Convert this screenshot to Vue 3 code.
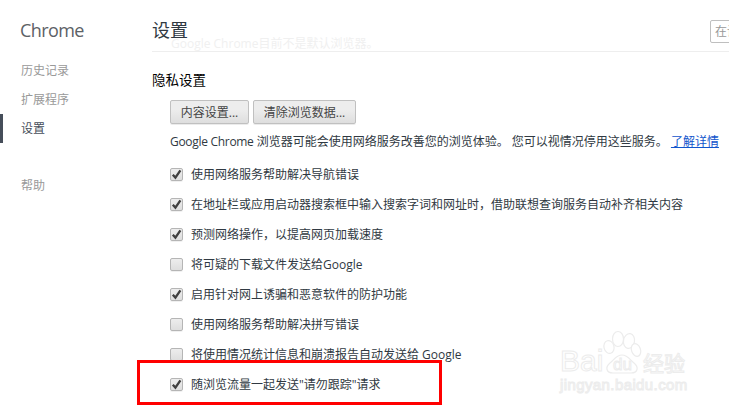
<template>
  <div class="page">
    <aside class="sidebar">
      <h1 class="brand">Chrome</h1>
      <ul class="nav">
        <li v-for="item in navItems" :key="item" :class="{ selected: item === '设置' }">{{ item }}</li>
      </ul>
      <div class="nav help">帮助</div>
    </aside>

    <main class="content">
      <header class="top">
        <h2 class="title">设置</h2>
        <div class="search">在设置中搜索</div>
        <div class="ghost">Google Chrome目前不是默认浏览器。</div>
      </header>

      <section class="privacy">
        <h3 class="section-title">隐私设置</h3>
        <div class="section-body">
          <div class="buttons">
            <button class="btn first">内容设置...</button>
            <button class="btn second">清除浏览数据...</button>
          </div>
          <p class="desc"><span class="latin">Google Chrome</span> 浏览器可能会使用网络服务改善您的浏览体验。 您可以视情况停用这些服务。 <a class="link">了解详情</a></p>
          <label v-for="opt in options" :key="opt.text" class="option">
            <span class="box">
              <svg v-if="opt.checked" width="11" height="11" viewBox="0 0 11 11">
                <path d="M1.8 5.8 L4.4 8.6 L9.4 1.4" fill="none" stroke="#3f3f3f" stroke-width="2.3" />
              </svg>
            </span>
            <span>{{ opt.text }}</span>
          </label>
        </div>
      </section>
    </main>

    <div class="highlight"></div>

    <div class="watermark">
      <span class="wm-bai">Bai</span>
      <svg class="wm-paw" width="42" height="46" viewBox="0 0 42 46" fill="#fff" stroke="#ececec" stroke-width="1.2">
        <ellipse cx="7" cy="17" rx="5" ry="6.5" transform="rotate(-15 7 17)" />
        <ellipse cx="16" cy="9" rx="5.5" ry="7.5" />
        <ellipse cx="27" cy="11" rx="5.5" ry="7.5" transform="rotate(10 27 11)" />
        <ellipse cx="34" cy="20" rx="4.5" ry="6.5" transform="rotate(-20 34 20)" />
        <path d="M20 25 C26 25 28 30 32 33 C37 37 36 43 29 43 L11 43 C4 43 3 37 8 33 C12 30 14 25 20 25 Z" />
      </svg>
      <span class="wm-du">du</span>
      <span class="wm-jy">经验</span>
      <span class="wm-url">jingyan.baidu.com</span>
    </div>
  </div>
</template>

<script setup>
const navItems = ['历史记录', '扩展程序', '设置']

const options = [
  { text: '使用网络服务帮助解决导航错误', checked: true },
  { text: '在地址栏或应用启动器搜索框中输入搜索字词和网址时，借助联想查询服务自动补齐相关内容', checked: true },
  { text: '预测网络操作，以提高网页加载速度', checked: true },
  { text: '将可疑的下载文件发送给Google', checked: false },
  { text: '启用针对网上诱骗和恶意软件的防护功能', checked: true },
  { text: '使用网络服务帮助解决拼写错误', checked: false },
  { text: '将使用情况统计信息和崩溃报告自动发送给 Google', checked: false },
  { text: '随浏览流量一起发送"请勿跟踪"请求', checked: true },
]
</script>

<style>
html, body {
  margin: 0;
  background: #fff;
  overflow: hidden;
}
</style>

<style scoped>
.page {
  position: relative;
  width: 729px;
  height: 410px;
  display: flex;
  overflow: hidden;
  background: #fff;
  font-family: "Open Sans", "Noto Sans CJK SC", sans-serif;
  font-size: 12px;
  color: #303942;
}
.sidebar {
  width: 152px;
  flex: none;
  padding-top: 17px;
  box-sizing: border-box;
}
.brand {
  margin: 0 0 0 20px;
  font-size: 18px;
  font-weight: 400;
  line-height: 26px;
  letter-spacing: -0.6px;
  color: #5c6166;
}
.nav {
  list-style: none;
  margin: 13px 0 0;
  padding: 0;
  color: #999;
}
.nav li {
  height: 29px;
  line-height: 29px;
  padding-left: 21px;
}
.nav li.selected {
  color: #464e5a;
  padding-left: 18px;
  border-left: 3px solid #464e5a;
}
.help {
  margin-top: 28px;
  height: 29px;
  line-height: 29px;
  padding-left: 21px;
}
.content {
  flex: 1;
  min-width: 0;
}
.top {
  position: relative;
  height: 51px;
  border-bottom: 1px solid #eee;
  overflow: hidden;
}
.title {
  margin: 0;
  padding-top: 17px;
  font-size: 18px;
  font-weight: 400;
  line-height: 26px;
  color: #303942;
}
.search {
  position: absolute;
  left: 558px;
  top: 20px;
  width: 100px;
  height: 23px;
  box-sizing: border-box;
  border: 1px solid #bfbfbf;
  border-radius: 2px;
  padding-left: 4px;
  line-height: 21px;
  color: #999;
  white-space: nowrap;
}
.ghost {
  position: absolute;
  left: 19px;
  top: 35px;
  line-height: 18px;
  color: #f0f0f0;
  white-space: nowrap;
}
.privacy {
  padding-top: 18px;
}
.section-title {
  margin: 0;
  font-size: 13.5px;
  font-weight: 400;
  line-height: 20px;
  color: #000;
}
.section-body {
  padding-left: 18px;
}
.buttons {
  display: flex;
  gap: 4px;
  margin-top: 10px;
}
.btn {
  height: 24px;
  padding: 0;
  border: 1px solid #c0c0c0;
  border-radius: 2px;
  background: linear-gradient(#ededed, #ededed 38%, #dedede);
  box-shadow: 0 1px 0 rgba(0, 0, 0, 0.08);
  font: inherit;
  color: #444;
}
.first {
  width: 79px;
}
.second {
  width: 103px;
}
.desc {
  margin: 9px 0 8px;
  line-height: 18px;
  white-space: nowrap;
}
.latin {
  letter-spacing: -0.3px;
}
.link {
  color: #15c;
  text-decoration: underline;
}
.option {
  display: flex;
  align-items: center;
  height: 30px;
  gap: 8px;
  white-space: nowrap;
}
.box {
  width: 13px;
  height: 13px;
  box-sizing: border-box;
  flex: none;
  display: flex;
  align-items: center;
  justify-content: center;
  border: 1px solid #b5b5b5;
  border-radius: 2px;
  background: linear-gradient(#ededed, #dedede);
  box-shadow: 0 1px 0 rgba(0, 0, 0, 0.06);
}
.highlight {
  position: absolute;
  left: 137px;
  top: 360px;
  width: 305px;
  height: 45px;
  box-sizing: border-box;
  border: 3px solid #f00;
}
.watermark {
  position: absolute;
  left: 530px;
  top: 330px;
  width: 199px;
  height: 80px;
  color: #fff;
  pointer-events: none;
  font-family: "Liberation Sans", sans-serif;
}
.watermark span {
  position: absolute;
  white-space: nowrap;
  -webkit-text-stroke: 1px #ececec;
}
.wm-paw {
  position: absolute;
  left: 72px;
  top: 0;
}
.wm-bai {
  left: 30px;
  top: 16px;
  font-size: 30px;
  line-height: 30px;
}
.wm-du {
  left: 83px;
  top: 26px;
  font-size: 17px;
  line-height: 18px;
}
.wm-jy {
  left: 113px;
  top: 20px;
  font-family: "Noto Sans CJK SC", sans-serif;
  font-size: 21px;
  line-height: 24px;
}
.wm-url {
  left: 30px;
  top: 46px;
  font-size: 15px;
  line-height: 18px;
  letter-spacing: 0.4px;
}
</style>
